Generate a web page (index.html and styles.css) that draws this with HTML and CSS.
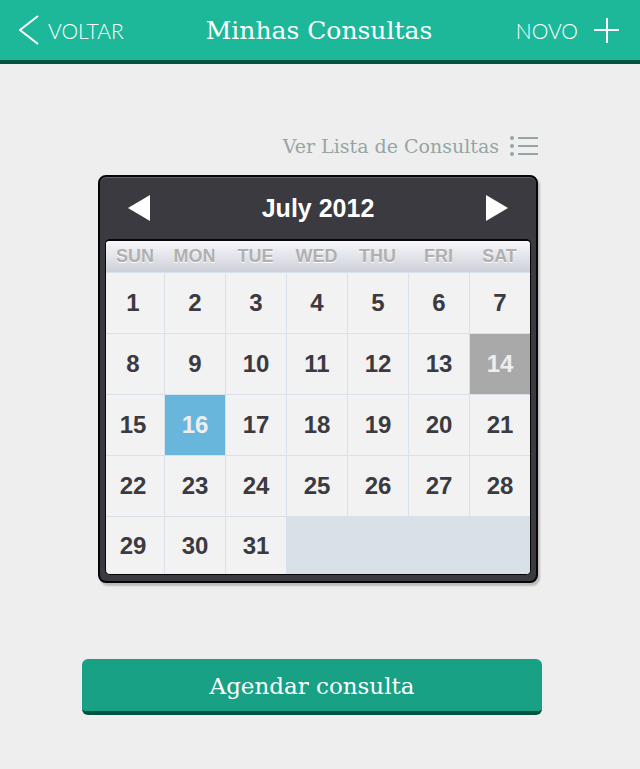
FILE: index.html
```html
<!DOCTYPE html>
<html lang="pt">
<head>
<meta charset="utf-8">
<meta name="viewport" content="width=device-width, initial-scale=1">
<title>Minhas Consultas</title>
<link rel="stylesheet" href="styles.css">
</head>
<body>
<header class="topbar">
  <a class="nav-link" href="#">
    <svg width="20" height="32" viewBox="0 0 20 32" aria-hidden="true"><path d="M19 2 1 16l18 14" fill="none" stroke="currentColor" stroke-width="2"/></svg>
    <span>VOLTAR</span>
  </a>
  <h1 class="title">Minhas Consultas</h1>
  <a class="nav-link nav-new" href="#">
    <span>NOVO</span>
    <svg width="25" height="26" viewBox="0 0 25 26" aria-hidden="true"><path d="M13 1v25M0 13h25" fill="none" stroke="currentColor" stroke-width="2"/></svg>
  </a>
</header>
<main class="content">
  <a class="list-link" href="#">
    <span>Ver Lista de Consultas</span>
    <svg width="28" height="20" viewBox="0 0 28 20" aria-hidden="true"><g fill="currentColor"><circle cx="2" cy="2" r="2"/><circle cx="2" cy="10" r="2"/><circle cx="2" cy="18" r="2"/><path d="M8 1h20v2H8zM8 9h20v2H8zM8 17h20v2H8z"/></g></svg>
  </a>
  <section class="calendar" aria-label="July 2012">
    <div class="month">
      <button class="arrow" type="button" aria-label="Previous month"><svg width="22" height="26" viewBox="0 0 22 26"><path d="M22 0v26L0 13z" fill="currentColor"/></svg></button>
      <h2 class="month-name">July 2012</h2>
      <button class="arrow" type="button" aria-label="Next month"><svg width="22" height="26" viewBox="0 0 22 26"><path d="M0 0v26l22-13z" fill="currentColor"/></svg></button>
    </div>
    <div class="grid">
      <table class="days">
        <thead>
          <tr><th>SUN</th><th>MON</th><th>TUE</th><th>WED</th><th>THU</th><th>FRI</th><th>SAT</th></tr>
        </thead>
        <tbody>
          <tr><td><button>1</button></td><td><button>2</button></td><td><button>3</button></td><td><button>4</button></td><td><button>5</button></td><td><button>6</button></td><td><button>7</button></td></tr>
          <tr><td><button>8</button></td><td><button>9</button></td><td><button>10</button></td><td><button>11</button></td><td><button>12</button></td><td><button>13</button></td><td class="today"><button>14</button></td></tr>
          <tr><td><button>15</button></td><td class="selected"><button>16</button></td><td><button>17</button></td><td><button>18</button></td><td><button>19</button></td><td><button>20</button></td><td><button>21</button></td></tr>
          <tr><td><button>22</button></td><td><button>23</button></td><td><button>24</button></td><td><button>25</button></td><td><button>26</button></td><td><button>27</button></td><td><button>28</button></td></tr>
          <tr><td><button>29</button></td><td><button>30</button></td><td><button>31</button></td><td class="blank" colspan="4"></td></tr>
        </tbody>
      </table>
    </div>
  </section>
  <button class="schedule" type="button">Agendar consulta</button>
</main>
</body>
</html>
```
FILE: styles.css
```css
* {
  box-sizing: border-box;
}

body {
  margin: 0;
  background: #eee;
  font-family: "Museo", "DejaVu Serif", serif;
}

button {
  margin: 0;
  padding: 0;
  border: 0;
  background: none;
  color: inherit;
  font: inherit;
  cursor: pointer;
}

a {
  color: inherit;
  text-decoration: none;
}

svg {
  display: block;
  flex: none;
}

.topbar {
  display: grid;
  grid-template-columns: 1fr auto 1fr;
  align-items: center;
  height: 64px;
  padding: 0 21px 0 19px;
  border-bottom: 4px solid #00533f;
  background: #1db899;
  color: #fff;
}

.nav-link {
  display: flex;
  align-items: center;
  gap: 9px;
  font-family: "Museo", Lato, sans-serif;
  font-size: 21px;
  font-weight: 300;
}

.nav-new {
  justify-content: flex-end;
  gap: 16px;
}

.title {
  margin: 0;
  padding-top: 2px;
  font-size: 25px;
  font-weight: 400;
  line-height: 32px;
}

.content {
  display: flex;
  flex-direction: column;
  max-width: 508px;
  margin: 0 auto;
  padding: 66px 32px 54px 16px;
}

.list-link {
  display: flex;
  align-items: center;
  justify-content: flex-end;
  gap: 11px;
  margin: 0 4px 13px 16px;
  color: #95a5a5;
  font-size: 19px;
  line-height: 32px;
}

.calendar {
  margin: 0 4px 0 16px;
  padding: 0 5px 6px;
  border: 2px solid #060608;
  border-radius: 8px;
  background: #3a3a40;
  box-shadow: inset 0 1px 0 #606568, 2px 3px 2px #bbb;
  color: #fff;
  font-family: "Liberation Sans", Arial, sans-serif;
}

.month {
  display: flex;
  align-items: center;
  justify-content: space-between;
  height: 62px;
  padding: 0 23px;
}

.month-name {
  margin: 0;
  font-size: 25px;
  line-height: 32px;
}

.grid {
  overflow: hidden;
  border: 1px solid #060608;
  border-top-width: 2px;
  border-radius: 5px;
  background: #f2f2f2;
}

.days {
  width: 100%;
  border-collapse: separate;
  border-spacing: 0;
  table-layout: fixed;
}

.days th {
  height: 31px;
  padding: 0;
  background: linear-gradient(#f8f8fa, #cdd0d9);
  color: #b0b0b0;
  font-size: 18px;
  line-height: 31px;
  text-shadow: 0 1px 0 #fff;
}

.days th:first-child {
  width: 58px;
}

.days td {
  padding: 0;
  border-top: 1px solid #d8e1e9;
  border-left: 1px solid #d8e1e9;
  color: #3a3a40;
  font-size: 24px;
  font-weight: 700;
}

.days td:first-child {
  border-left: 0;
  padding-right: 4px;
}

.days button {
  display: block;
  width: 100%;
  height: 60px;
}

.days tr:last-child button {
  height: 57px;
}

.days .today {
  background: #a9a9a9;
  color: #eee;
}

.days .selected {
  background: #69b6dd;
  color: #eee;
}

.days .blank {
  background: #d8e0e8;
}

.schedule {
  height: 56px;
  margin-top: 76px;
  padding-top: 2px;
  border-bottom: 4px solid #00533f;
  border-radius: 6px;
  background: #19a186;
  color: #fff;
  font-size: 23px;
}
```
